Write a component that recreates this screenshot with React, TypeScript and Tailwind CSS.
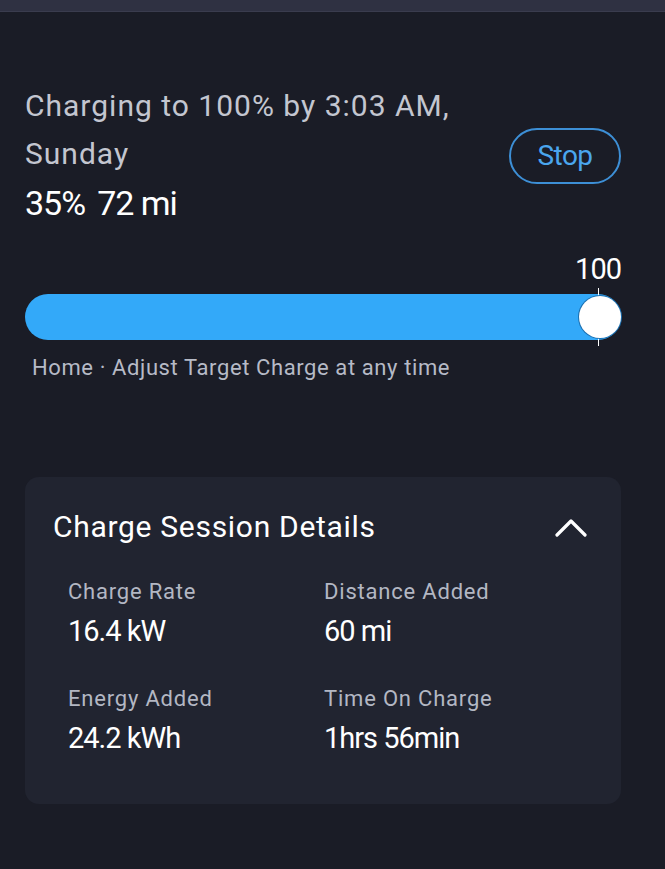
const details = [
  { label: 'Charge Rate', value: '16.4 kW' },
  { label: 'Distance Added', value: '60 mi' },
  { label: 'Energy Added', value: '24.2 kWh' },
  { label: 'Time On Charge', value: '1hrs 56min' },
];

export default function App() {
  return (
    <div
      className="min-h-[869px] w-[665px] bg-[#1a1c26] text-white"
      style={{ fontFamily: 'Roboto, "Noto Sans", sans-serif' }}
    >
      <div className="h-[12px] border-b border-[#3a3c4e] bg-[#2f3142]" />

      <div className="w-[596px] ml-[25px] pt-[70px]">
        <div className="flex items-start justify-between">
          <div>
            <div className="text-[30px] leading-[48px] text-[#c3c6d0] tracking-[1px]">
              Charging to 100% by 3:03 AM,
              <br />
              Sunday
            </div>
            <div className="mt-[5px] flex gap-[12px] text-[34px] leading-[40px] tracking-[-1px]">
              <span>35%</span>
              <span>72 mi</span>
            </div>
          </div>
          <button className="mt-[46px] h-[56px] w-[112px] rounded-full border-2 border-[#3d8fd6] text-[28px] tracking-[-0.5px] text-[#4aa6ee]">
            Stop
          </button>
        </div>

        <div className="mt-[31px] flex justify-end text-[29px] leading-[30px] tracking-[-1px]">100</div>

        <div className="relative mt-[10px] h-[46px] rounded-full bg-[#33a9f9]">
          <div className="absolute right-[22px] top-[-6px] h-[58px] w-px bg-white" />
          <div className="absolute right-0 top-[2px] h-[42px] w-[42px] rounded-full bg-white shadow-[0_0_0_1px_#1b6fb0]" />
        </div>

        <div className="mt-[15px] pl-[7px] text-[22px] leading-[26px] tracking-[0.6px] text-[#b6bac6]">
          Home · Adjust Target Charge at any time
        </div>

        <div className="mt-[96px] rounded-[14px] bg-[#212430] pb-[49px]">
          <div className="flex items-center justify-between pl-[28px] pr-[34px] pt-[32px]">
            <div className="text-[30px] leading-[36px] tracking-[0.7px]">Charge Session Details</div>
            <svg width="32" height="22" viewBox="0 0 32 22" fill="none" stroke="white" strokeWidth="3.2" strokeLinecap="round" strokeLinejoin="round">
              <polyline points="2,19 16,5 30,19" />
            </svg>
          </div>
          <div className="mt-[34px] grid grid-cols-[256px_1fr] gap-y-[38px] pl-[43px]">
            {details.map((d) => (
              <div key={d.label}>
                <div className="text-[22px] leading-[26px] tracking-[0.8px] text-[#b3b7c3]">{d.label}</div>
                <div className="mt-[9px] text-[29px] leading-[34px] tracking-[-1px]">{d.value}</div>
              </div>
            ))}
          </div>
        </div>
      </div>
    </div>
  );
}
